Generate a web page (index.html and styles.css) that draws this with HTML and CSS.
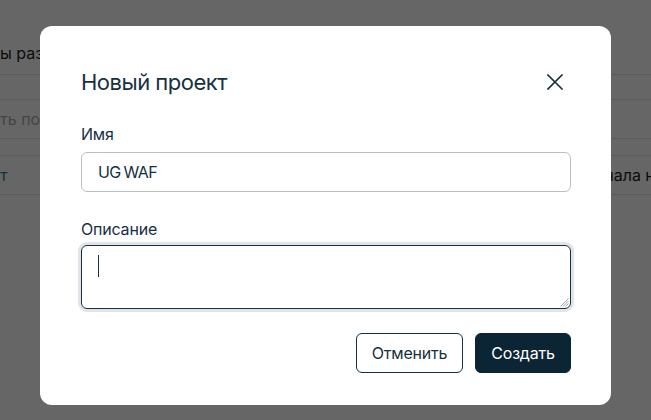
FILE: index.html
```html
<!DOCTYPE html>
<html lang="ru">
<head>
<meta charset="utf-8">
<title>Новый проект</title>
<link rel="stylesheet" href="styles.css">
</head>
<body>
<div class="page">
  <div class="page-row page-head"><span class="head-text">ы размещены</span></div>
  <div class="page-row page-gap"></div>
  <div class="page-row page-search"><span class="placeholder">ть по названию</span></div>
  <div class="page-row page-gap2"></div>
  <div class="page-row page-item">
    <span class="link">т</span>
    <span class="cell">чала н</span>
  </div>
</div>

<div class="overlay">
  <div class="modal" role="dialog" aria-labelledby="mtitle">
    <div class="modal-head">
      <h2 class="modal-title" id="mtitle">Новый проект</h2>
      <button class="close" aria-label="Закрыть">
        <svg width="16" height="16" viewBox="0 0 16 16" fill="none" stroke="#16303f" stroke-width="1.6" stroke-linecap="square">
          <path d="M1 1L15 15M15 1L1 15"/>
        </svg>
      </button>
    </div>
    <label class="label">Имя</label>
    <div class="input">UG WAF</div>
    <label class="label label-desc">Описание</label>
    <div class="textarea">
      <span class="caret"></span>
      <svg class="grip" width="10" height="10" viewBox="0 0 10 10" stroke="#9aa3a9" stroke-width="1">
        <path d="M9.5 1.5L1.5 9.5M9.5 4L4 9.5M9.5 6.5L6.5 9.5"/>
      </svg>
    </div>
    <div class="actions">
      <button class="btn btn-outline">Отменить</button>
      <button class="btn btn-primary">Создать</button>
    </div>
  </div>
</div>
</body>
</html>
```

FILE: styles.css
```css
* { box-sizing: border-box; }

html, body {
  margin: 0;
  padding: 0;
  width: 651px;
  height: 420px;
  overflow: hidden;
  background: #ffffff;
  font-family: Inter, "Noto Sans", sans-serif;
}

.page {
  padding-top: 40px;
  font-size: 16px;
  color: #1a1f24;
  overflow: hidden;
}

.page-row {
  border-bottom: 1px solid #e2e4e6;
}

.page-head {
  height: 35px;
  padding-top: 1px;
  line-height: 24px;
}

.page-gap { height: 25px; }

.page-search {
  height: 39px;
  line-height: 38px;
}
.placeholder { color: #a9acaf; }

.page-gap2 { height: 17px; }

.page-item {
  height: 39px;
  line-height: 38px;
  display: flex;
  overflow: hidden;
}
.link { color: #1f8593; }
.cell { margin-left: 597px; white-space: nowrap; }

.overlay {
  position: fixed;
  inset: 0;
  background: rgba(0, 0, 0, 0.6);
}

.modal {
  position: absolute;
  left: 40px;
  top: 26px;
  width: 571px;
  background: #ffffff;
  border-radius: 12px;
  padding: 40px 40px 32px 41px;
  display: flex;
  flex-direction: column;
  color: #16303f;
}

.modal-head {
  display: flex;
  align-items: center;
  justify-content: space-between;
  height: 32px;
  margin-bottom: 24px;
}

.modal-title {
  margin: 0;
  font-size: 22px;
  font-weight: 400;
  line-height: 32px;
  color: #16303f;
  letter-spacing: -0.5px;
}

.close {
  width: 24px;
  height: 24px;
  margin-right: 4px;
  padding: 0;
  border: 0;
  background: transparent;
  display: flex;
  align-items: center;
  justify-content: center;
}

.label {
  display: block;
  font-size: 16px;
  line-height: 24px;
  color: #16303f;
  margin-bottom: 6px;
  letter-spacing: -0.2px;
}

.label-desc {
  margin-top: 25px;
  margin-bottom: 4px;
}

.input {
  height: 40px;
  border: 1px solid #b9c1c7;
  border-radius: 6px;
  padding: 0 16px;
  font-size: 16px;
  line-height: 38px;
  color: #16303f;
  letter-spacing: -0.6px;
  word-spacing: -1px;
}

.textarea {
  position: relative;
  height: 64px;
  border: 1px solid #16303f;
  border-radius: 6px;
  box-shadow: 0 0 0 3px #e1e5e9;
  padding: 8px 16px;
}

.caret {
  display: block;
  width: 1px;
  height: 22px;
  background: #16303f;
  margin-top: 1px;
}

.grip {
  position: absolute;
  right: 1px;
  bottom: 1px;
}

.actions {
  display: flex;
  justify-content: flex-end;
  gap: 12px;
  margin-top: 24px;
}

.btn {
  height: 40px;
  border-radius: 6px;
  font-family: Inter, "Noto Sans", sans-serif;
  font-size: 16px;
  padding: 0 12px;
  letter-spacing: -0.2px;
  cursor: pointer;
}

.btn-outline {
  width: 107px;
  background: #ffffff;
  border: 1px solid #16303f;
  color: #16303f;
}

.btn-primary {
  width: 96px;
  background: #0b2535;
  border: 1px solid #0b2535;
  color: #ffffff;
}
```
